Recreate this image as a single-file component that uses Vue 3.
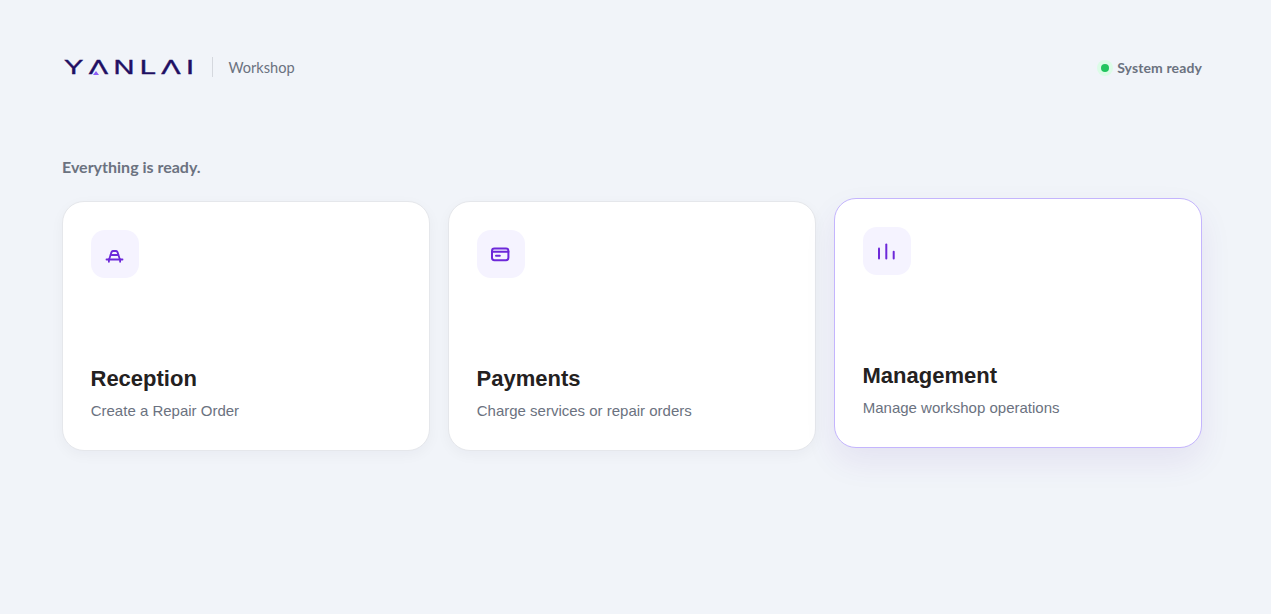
<script setup>
const cards = [
  { title: 'Reception', sub: 'Create a Repair Order', icon: 'car' },
  { title: 'Payments', sub: 'Charge services or repair orders', icon: 'card' },
  { title: 'Management', sub: 'Manage workshop operations', icon: 'bars', active: true },
]
</script>

<template>
  <div class="page">
    <header class="top">
      <div class="brand">
        <div class="logo" aria-label="YANLAI">
          <span class="word">YΛNLΛI</span>
          <span class="notch"></span>
        </div>
        <span class="sep"></span>
        <span class="area">Workshop</span>
      </div>
      <div class="status">
        <span class="dot"></span>
        <span>System ready</span>
      </div>
    </header>
    <p class="lead">Everything is ready.</p>
    <div class="grid">
      <section v-for="c in cards" :key="c.title" class="card" :class="{ active: c.active }">
        <div class="icon">
          <svg v-if="c.icon === 'car'" width="20" height="20" viewBox="0 0 20 20" fill="none" stroke="#6d28d9" stroke-width="1.8" stroke-linecap="round" stroke-linejoin="round">
            <path d="M4.300 15 5.700 10.600Q6.400 7 8 7H11Q12.600 7 13.300 10.600L14.700 15"/>
            <path d="M5.700 11H13.300"/>
            <path d="M1.500 15.500H17.500"/>
            <path d="M3.900 15.500V17.800M15.100 15.500V17.800"/>
          </svg>
          <svg v-else-if="c.icon === 'card'" width="20" height="20" viewBox="0 0 20 20" fill="none" stroke="#6d28d9" stroke-width="2" stroke-linecap="round" stroke-linejoin="round">
            <rect x="1" y="4.600" width="16.400" height="11.600" rx="2.400"/>
            <path d="M1 7.800H17.400"/>
            <path d="M5 11.800H8.800"/>
          </svg>
          <svg v-else width="20" height="20" viewBox="0 0 20 20" fill="none" stroke="#6d28d9" stroke-width="2" stroke-linecap="round">
            <path d="M2 7.500V17.500"/>
            <path d="M9.300 3.500V17.500"/>
            <path d="M16.700 10.800V17.500"/>
          </svg>
        </div>
        <div class="text">
          <h2>{{ c.title }}</h2>
          <p>{{ c.sub }}</p>
        </div>
      </section>
    </div>
  </div>
</template>

<style>
html, body { margin: 0; background: #f1f4f9; }
</style>

<style scoped>
.page {
  min-height: 614px;
  box-sizing: border-box;
  padding: 56px 69px 0 62px;
  background: #f1f4f9;
  font-family: "Liberation Sans", Arial, sans-serif;
}
.top {
  display: flex;
  align-items: center;
  justify-content: space-between;
  height: 22px;
}
.brand { display: flex; align-items: center; }
.logo {
  position: relative;
  width: 132px;
  height: 22px;
  margin-right: 18px;
}
.word {
  position: absolute;
  left: 1.500px;
  top: 0;
  font-size: 20px;
  line-height: 22px;
  letter-spacing: 3.700px;
  color: #1f0f63;
  -webkit-text-stroke: 0.4px #1f0f63;
  transform: scaleX(1.45);
  transform-origin: left center;
  white-space: nowrap;
}
.notch {
  position: absolute;
  left: 31px;
  top: 15px;
  width: 0;
  height: 0;
  border-left: 3px solid transparent;
  border-right: 3px solid transparent;
  border-bottom: 4px solid #8b5cf6;
}
.sep { width: 1px; height: 20px; background: #d5d8de; margin-right: 15.500px; }
.area {
  font-family: Lato, sans-serif;
  font-size: 14.600px;
  color: #6b7280;
}
.status {
  display: flex;
  align-items: center;
  gap: 8px;
  padding-top: 1px;
  font-family: Lato, sans-serif;
  font-size: 14px;
  letter-spacing: 0.12px;
  font-weight: 700;
  color: #6b7280;
}
.dot {
  width: 8px;
  height: 8px;
  border-radius: 50%;
  background: #22c55e;
  box-shadow: 0 0 0 4px #dcfce7;
}
.lead {
  margin: 78px 0 0;
  font-family: Lato, sans-serif;
  font-size: 16px;
  font-weight: 700;
  line-height: 22px;
  color: #6b7280;
}
.grid {
  display: grid;
  grid-template-columns: repeat(3, 1fr);
  gap: 18px;
  margin-top: 23px;
}
.card {
  height: 250px;
  box-sizing: border-box;
  padding: 28px;
  background: #fff;
  border: 1px solid #e5e7eb;
  border-radius: 22px;
  box-shadow: 0 4px 14px rgba(17, 24, 39, 0.04);
  display: flex;
  flex-direction: column;
  justify-content: space-between;
}
.card.active {
  transform: translateY(-3px);
  border-color: #c4b5fd;
  box-shadow: 0 14px 32px rgba(76, 29, 149, 0.08);
}
.icon {
  width: 48px;
  height: 48px;
  border-radius: 14px;
  background: #f5f3ff;
  display: flex;
  align-items: center;
  justify-content: center;
}
.text { padding-bottom: 1px; }
h2 {
  margin: 0 0 0 -0.500px;
  font-size: 22px;
  line-height: 30px;
  font-weight: 700;
  color: #24211f;
}
.text p {
  margin: 7px 0 0 -0.300px;
  font-size: 15px;
  line-height: 20px;
  color: #6b7280;
}
</style>
